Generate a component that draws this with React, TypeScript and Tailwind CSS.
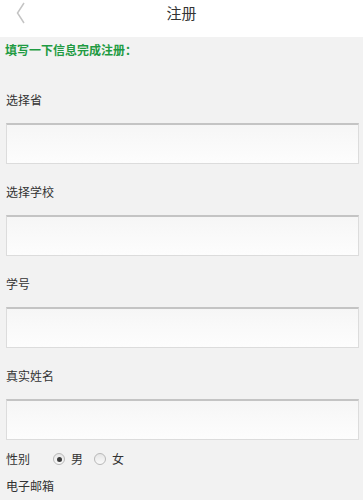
import React from "react";

const font = { fontFamily: '"Noto Sans CJK SC", "Noto Sans", sans-serif' };

function Field({ label, first }: { label: string; first?: boolean }) {
  return (
    <div className={first ? "mt-[31px]" : "mt-[18px]"}>
      <div className="h-[20px] px-[6px] text-[12px] leading-[20px] text-[#333]">{label}</div>
      <div className="ml-[6px] mr-[4px] mt-[13px] h-[41px] border border-[#dcdcdc] border-t-2 border-t-[#c4c4c4] bg-gradient-to-b from-[#f6f6f6] to-[#fdfdfd]" />
    </div>
  );
}

function Radio({ checked }: { checked?: boolean }) {
  return (
    <span className="inline-flex h-[12px] w-[12px] items-center justify-center rounded-full border border-[#b8b8b8] bg-gradient-to-b from-[#e6e6e6] to-[#fafafa]">
      {checked && <span className="h-[5px] w-[5px] rounded-full bg-[#3c3c3c]" />}
    </span>
  );
}

export default function App() {
  return (
    <div className="h-[500px] w-[363px] overflow-hidden bg-[#f2f2f2]" style={font}>
      <div className="relative h-[37px] bg-white">
        <svg className="absolute left-[16px] top-[2px]" width="10" height="22" viewBox="0 0 10 22">
          <path d="M8 1 L1.5 11 L8 21" fill="none" stroke="#c4c4c4" strokeWidth="1.5" />
        </svg>
        <div className="pt-[2px] text-center text-[15px] leading-[22px] text-[#333]">注册</div>
      </div>
      <div className="px-[5px] pt-[4px] text-[12px] font-bold leading-[18px] text-[#1f9b42]">填写一下信息完成注册：</div>
      <Field label="选择省" first />
      <Field label="选择学校" />
      <Field label="学号" />
      <Field label="真实姓名" />
      <div className="mt-[9px] flex h-[20px] items-center px-[6px] text-[12px] leading-[20px] text-[#333]">
        <span>性别</span>
        <span className="ml-[23px] flex items-center">
          <Radio checked />
        </span>
        <span className="ml-[6px]">男</span>
        <span className="ml-[11px] flex items-center">
          <Radio />
        </span>
        <span className="ml-[6px]">女</span>
      </div>
      <div className="mt-[7px] h-[20px] px-[6px] text-[12px] leading-[20px] text-[#333]">电子邮箱</div>
    </div>
  );
}
